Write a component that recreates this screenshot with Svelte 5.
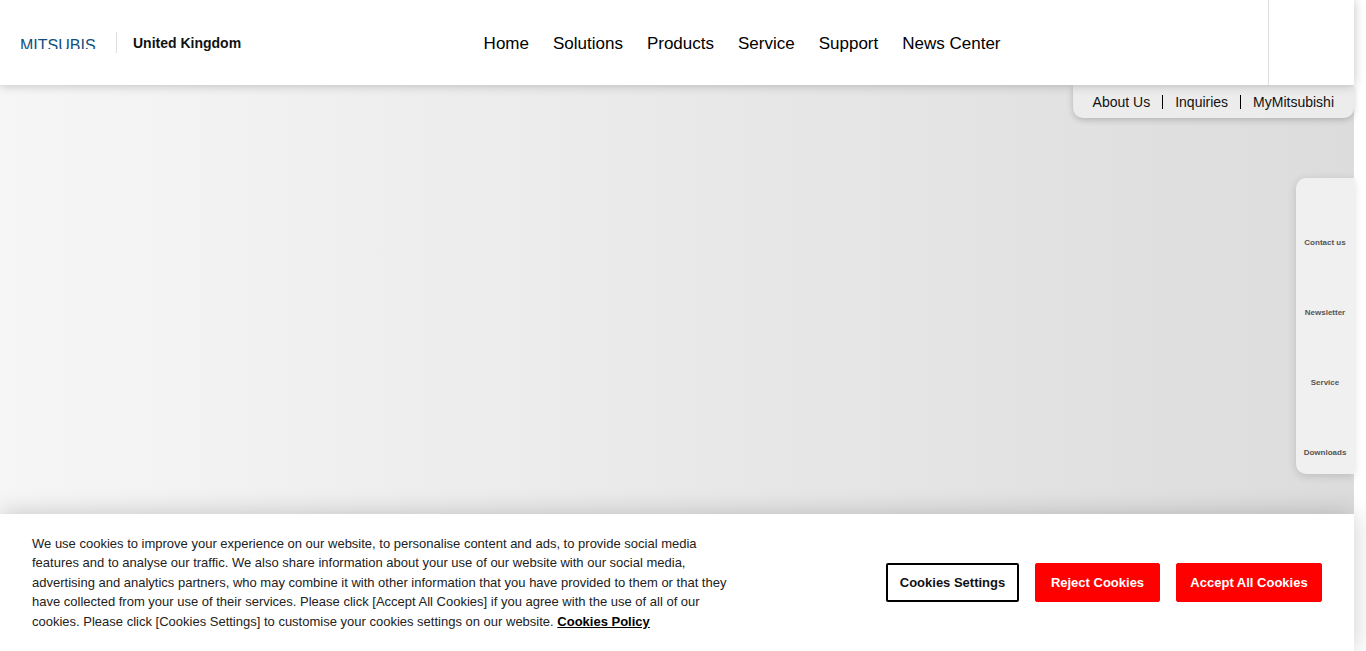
<script>
  const mainNav = ["Home", "Solutions", "Products", "Service", "Support", "News Center"];
  const subNav = ["About Us", "Inquiries", "MyMitsubishi"];
  const sideTabs = ["Contact us", "Newsletter", "Service", "Downloads"];
</script>

<div class="page">
  <header class="header">
    <div class="brand">
      <div class="logo">MITSUBISHI ELECTRIC</div>
      <div class="region">United Kingdom</div>
    </div>
    <nav class="main-nav">
      {#each mainNav as item}
        <span>{item}</span>
      {/each}
    </nav>
    <div class="search"></div>
  </header>

  <main class="hero">
    <div class="sub-nav">
      {#each subNav as item}
        <span>{item}</span>
      {/each}
    </div>
    <aside class="side-tabs">
      {#each sideTabs as tab}
        <div class="tab"><span>{tab}</span></div>
      {/each}
    </aside>
  </main>

  <div class="cookies">
    <p>
      We use cookies to improve your experience on our website, to personalise content and ads, to provide social media
      features and to analyse our traffic. We also share information about your use of our website with our social media,
      advertising and analytics partners, who may combine it with other information that you have provided to them or that they
      have collected from your use of their services. Please click [Accept All Cookies] if you agree with the use of all of our
      cookies. Please click [Cookies Settings] to customise your cookies settings on our website.
      <a href="#policy">Cookies Policy</a>
    </p>
    <div class="actions">
      <button class="outline">Cookies Settings</button>
      <button class="red reject">Reject Cookies</button>
      <button class="red accept">Accept All Cookies</button>
    </div>
  </div>
</div>

<style>
  :global(html), :global(body) {
    margin: 0;
    height: 651px;
    overflow: hidden;
    background: #fff;
  }
  .page {
    position: relative;
    width: 1354px;
    height: 651px;
    font-family: "Liberation Sans", Arial, sans-serif;
    color: #000;
    display: flex;
    flex-direction: column;
  }
  .header {
    position: relative;
    z-index: 2;
    flex: none;
    height: 85px;
    background: #fff;
    box-shadow: 0 0 10px rgba(0, 0, 0, 0.25);
    display: flex;
    align-items: center;
  }
  .brand {
    width: 460px;
    padding-left: 20px;
    box-sizing: border-box;
    display: flex;
    align-items: center;
    flex: none;
  }
  .logo {
    width: 76px;
    height: 12px;
    margin-right: 20px;
    overflow: hidden;
    white-space: nowrap;
    font-size: 16px;
    line-height: 18px;
    color: #0f4f7f;
  }
  .region {
    border-left: 1px solid #ddd;
    padding-left: 16px;
    height: 21px;
    font-size: 14px;
    line-height: 23px;
    font-weight: 700;
    color: #111;
  }
  .main-nav {
    flex: 1;
    display: flex;
    gap: 24px;
    padding: 2px 0 0 24px;
    margin-left: -0.4px;
    font-size: 17px;
  }
  .search {
    flex: none;
    width: 85px;
    height: 85px;
    border-left: 1px solid #ddd;
  }
  .hero {
    position: relative;
    flex: 1;
    background: linear-gradient(90deg, #f6f6f6, #dcdcdc);
    display: flex;
    flex-direction: column;
    align-items: flex-end;
  }
  .sub-nav {
    height: 33px;
    padding: 0 20px;
    display: flex;
    align-items: center;
    background: #ececec;
    border-radius: 0 0 10px 10px;
    box-shadow: 0 2px 6px rgba(0, 0, 0, 0.2);
    font-size: 14px;
    color: #111;
  }
  .sub-nav span + span {
    margin-left: 12px;
    padding-left: 12px;
    border-left: 1px solid #000;
    line-height: 14px;
  }
  .side-tabs {
    margin-top: 60px;
    width: 58px;
    height: 296px;
    padding-top: 7px;
    box-sizing: border-box;
    background: #f0f0f0;
    border-radius: 10px 0 0 10px;
    box-shadow: 0 2px 8px rgba(0, 0, 0, 0.15);
  }
  .tab {
    height: 70px;
    display: flex;
    align-items: flex-end;
    justify-content: center;
    font-size: 8px;
    font-weight: 700;
    color: #555;
  }
  .tab span {
    padding-bottom: 7px;
    line-height: 10px;
  }
  .cookies {
    position: absolute;
    z-index: 3;
    left: 0;
    right: 0;
    bottom: 0;
    height: 137px;
    box-sizing: border-box;
    padding: 19.7px 32px 0;
    background: #fff;
    box-shadow: 0 0 24px rgba(0, 0, 0, 0.2);
    display: flex;
    justify-content: space-between;
  }
  .cookies p {
    margin: 0;
    width: 700px;
    font-size: 13px;
    line-height: 19.5px;
    color: #222;
  }
  .cookies a {
    color: #000;
    font-weight: 700;
    text-decoration: underline;
  }
  .actions {
    display: flex;
    gap: 16px;
    padding-top: 29.3px;
    align-items: flex-start;
  }
  button {
    width: 133px;
    height: 39px;
    box-sizing: border-box;
    padding: 0;
    border-radius: 2px;
    font: 700 13px "Liberation Sans", Arial, sans-serif;
    cursor: pointer;
  }
  .outline {
    background: #fff;
    border: 2px solid #000;
    color: #111;
  }
  .red {
    background: #f00;
    border: 1px solid #f00;
    color: #fff;
  }
  .reject {
    width: 125px;
  }
  .accept {
    width: 146px;
  }
</style>
